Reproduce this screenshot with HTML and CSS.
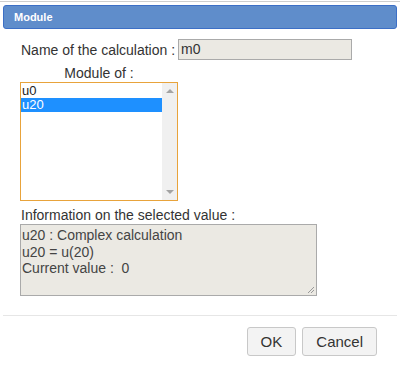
FILE: index.html
```html
<!DOCTYPE html>
<html lang="en">
<head>
  <meta charset="UTF-8">
  <title>Module</title>
  <link rel="stylesheet" href="styles.css">
</head>
<body>

  <div class="dialog">
    <div class="titlebar">Module</div>

    <div class="content">
      <!-- Name row -->
      <div class="name-row">
        <span class="label">Name of the calculation :</span>
        <div class="field">m0</div>
      </div>

      <!-- Module list -->
      <div class="module-col">
        <div class="col-label">Module of :</div>
        <div class="listbox">
          <div class="options">
            <div class="option">u0</div>
            <div class="option selected">u20</div>
          </div>
          <div class="scrollbar">
            <span class="arrow up"></span>
            <span class="arrow down"></span>
          </div>
        </div>
      </div>

      <div class="info-label">Information on the selected value :</div>
      <div class="info">
        <div>u20 : Complex calculation</div>
        <div>u20 = u(20)</div>
        <div>Current value :&nbsp; 0</div>
        <svg class="grip" width="8" height="8" viewBox="0 0 8 8">
          <path d="M1 7 L7 1 M4 7 L7 4" stroke="#999" stroke-width="1" fill="none"/>
        </svg>
      </div>
    </div>

    <div class="buttons">
      <button class="btn">OK</button>
      <button class="btn">Cancel</button>
    </div>
  </div>

</body>
</html>
```

FILE: styles.css
```css
body {
  margin: 0;
  padding-top: 1px;
  font-family: "Liberation Sans", Arial, sans-serif;
  background: #fff;
  color: #333;
}

.dialog {
  border-top: 1px solid #cfcfcf;
  padding: 3px 3px 0 3px;
  height: 368px;
}

.titlebar {
  height: 22px;
  line-height: 22px;
  background: #5f8dcb;
  border: 1px solid #3c6fc6;
  border-radius: 3px;
  color: #fff;
  font-weight: bold;
  font-size: 11px;
  padding-left: 10px;
}

.content {
  box-sizing: border-box;
  padding: 10px 0 0 17px;
  height: 286px;
}

.name-row {
  display: flex;
  align-items: center;
  font-size: 14px;
}

.label {
  margin-left: 1px;
  margin-right: 3px;
}

.field {
  width: 170px;
  height: 19px;
  line-height: 19px;
  padding-left: 2px;
  background: #ebe9e3;
  border: 1px solid #aaa;
  font-size: 14px;
}

.module-col {
  width: 158px;
  margin-top: 5px;
}

.col-label {
  text-align: center;
  font-size: 14px;
  height: 17px;
  line-height: 16px;
}

.listbox {
  display: flex;
  height: 117px;
  border: 1px solid #e8a33b;
  font-size: 13px;
  color: #222;
  background: #fff;
}

.options {
  flex: 1;
  padding-top: 1px;
}

.option {
  height: 14px;
  line-height: 14px;
  padding-left: 1px;
}

.option.selected {
  background: #1e90ff;
  color: #fff;
}

.scrollbar {
  width: 15px;
  background: #f0f0f0;
  display: flex;
  flex-direction: column;
  justify-content: space-between;
  align-items: center;
  padding: 6px 0;
}

.arrow {
  width: 0;
  height: 0;
  border-left: 4px solid transparent;
  border-right: 4px solid transparent;
}

.arrow.up {
  border-bottom: 4px solid #a3a3a3;
}

.arrow.down {
  border-top: 4px solid #a3a3a3;
}

.info-label {
  font-size: 14px;
  margin-top: 5px;
  padding-left: 1px;
  height: 18px;
  line-height: 18px;
}

.info {
  position: relative;
  width: 293px;
  height: 66px;
  padding: 2px 1px;
  border: 1px solid #aaa;
  background: #ebe9e3;
  font-size: 14px;
  line-height: 16.5px;
  color: #444;
}

.grip {
  position: absolute;
  right: 1px;
  bottom: 1px;
}

.buttons {
  border-top: 1px solid #e6e6e6;
  padding: 11px 20px 0 0;
  display: flex;
  justify-content: flex-end;
  gap: 6px;
}

.btn {
  font-family: "Liberation Sans", Arial, sans-serif;
  font-size: 15px;
  color: #333;
  background: #f3f3f3;
  border: 1px solid #c8c8c8;
  border-radius: 3px;
  height: 29px;
  padding: 0 13px;
}
```
